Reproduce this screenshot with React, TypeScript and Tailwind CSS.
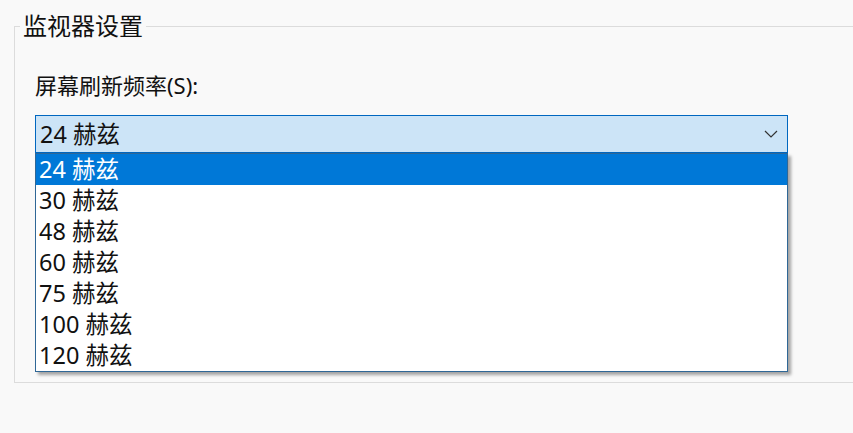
const rates = ["24", "30", "48", "60", "75", "100", "120"];

const font = "font-['Segoe_UI','Noto_Sans','Noto_Sans_CJK_SC',sans-serif]";

export default function App() {
  return (
    <div className={`w-[853px] h-[433px] overflow-hidden bg-[#f9f9f9] text-[#111] ${font}`}>
      <div className="pt-[26px] pl-[14px]">
        {/* group box */}
        <div className="relative w-[900px] h-[357px] border-l border-t border-b border-[#dcdcdc]">
          <div className="absolute left-[5px] top-[-15px] px-[3px] bg-[#f9f9f9] text-[24px] leading-[28px]">
            监视器设置
          </div>

          <div className="pl-[20px] pt-[44px]">
            <div className="text-[22px] leading-[28px]">屏幕刷新频率(S):</div>

            <div className="relative mt-[16px] w-[753px]">
              {/* combo box */}
              <div className="flex items-center justify-between h-[38px] border border-[#0067c0] bg-[#cce4f7] pl-[4px] pr-[9px]">
                <span className="text-[23.5px] leading-[30px]">24 赫兹</span>
                <svg width="14" height="8" viewBox="0 0 14 8" className="text-[#333]">
                  <path d="M1 1 L7 7 L13 1" fill="none" stroke="currentColor" strokeWidth="1.2" />
                </svg>
              </div>

              {/* open list */}
              <div className="absolute left-0 top-[38px] w-[753px] bg-white border border-[#2f6796] shadow-[3px_3px_3px_rgba(0,0,0,0.35)]">
                {rates.map((r, i) => (
                  <div
                    key={r}
                    className={`h-[31px] pl-[3px] text-[23.5px] leading-[31px] ${i === 0 ? "bg-[#0078d7] text-white" : "text-[#111]"}`}
                  >
                    {r} 赫兹
                  </div>
                ))}
              </div>
            </div>
          </div>
        </div>
      </div>
    </div>
  );
}
